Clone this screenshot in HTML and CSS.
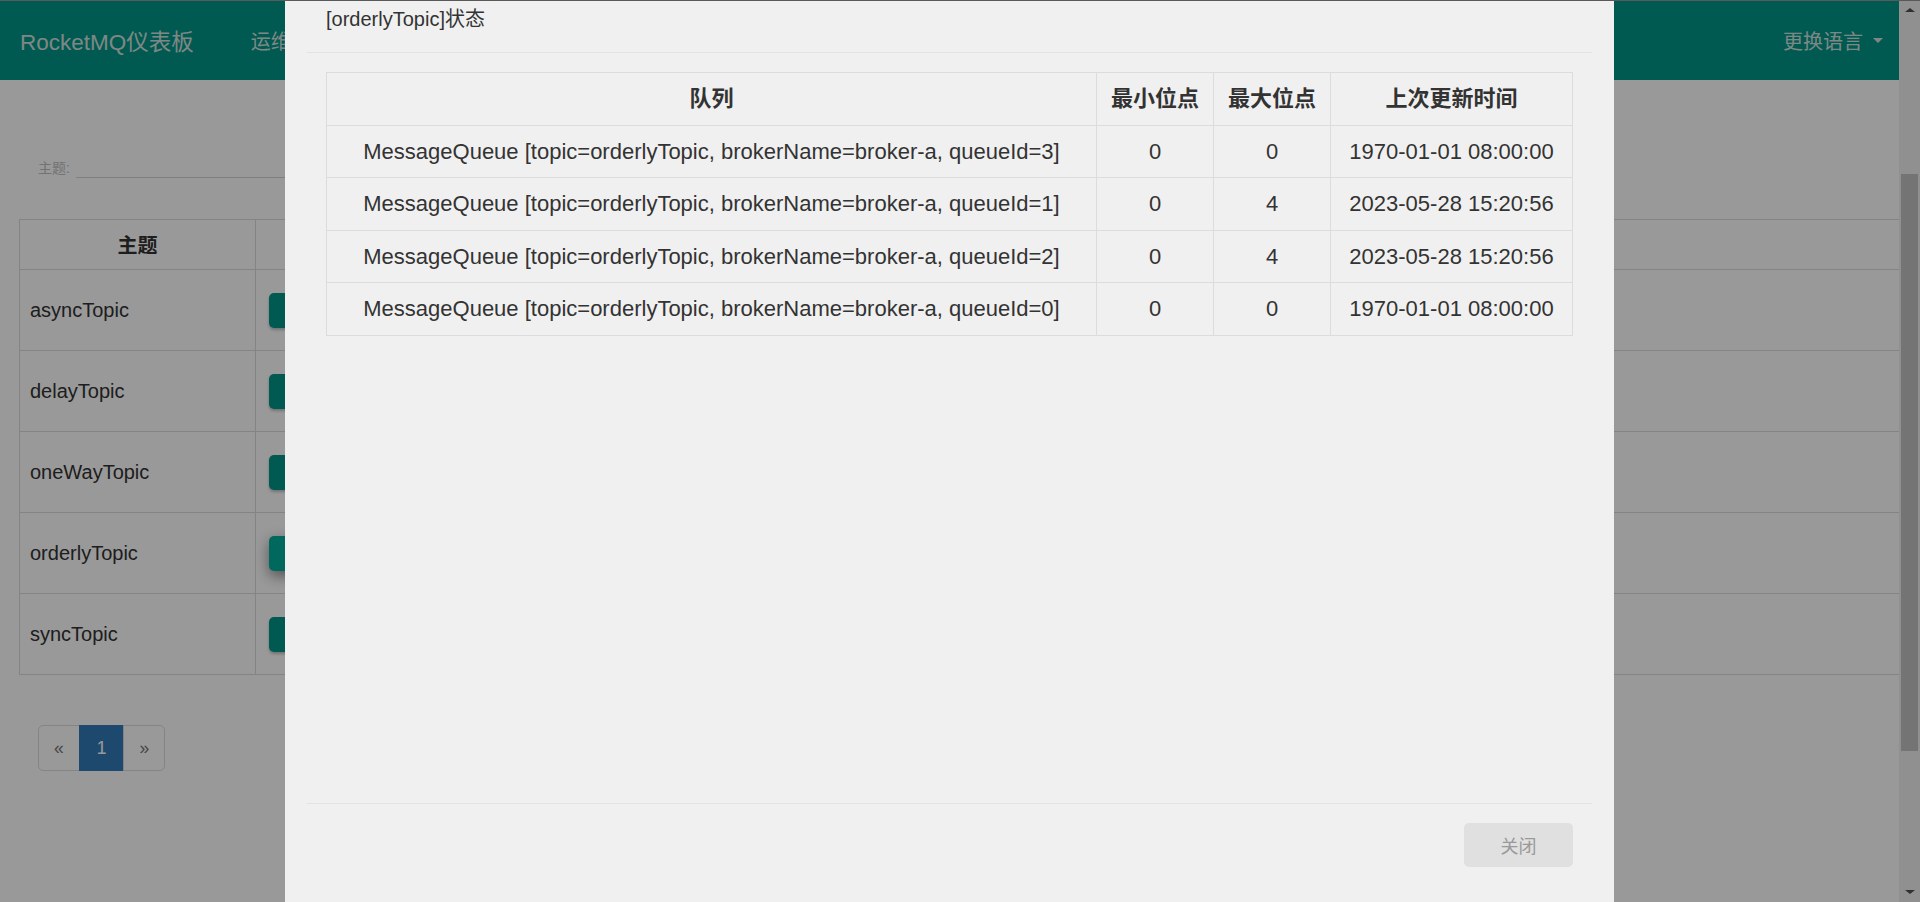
FILE: index.html
```html
<html lang="zh-CN">
  <head>
    <meta charset="utf-8">
    <title>RocketMQ仪表板</title>
    <link rel="stylesheet" href="styles.css">
  </head>
  <body>
    <div class="page">
      <nav class="navbar">
        <span class="brand">RocketMQ仪表板</span>
        <ul class="nav-links">
          <li>运维</li>
          <li>驾驶舱</li>
          <li>集群</li>
          <li>主题</li>
          <li>消费者</li>
          <li>生产者</li>
          <li>消息</li>
          <li>消息轨迹</li>
        </ul>
        <div class="lang">更换语言 <span class="caret"></span></div>
      </nav>

      <main class="content">
        <form class="search">
          <label for="topic-filter">主题:</label>
          <input type="text" id="topic-filter">
        </form>

        <table class="topic-table">
          <thead>
            <tr><th class="col-name">主题</th><th>操作</th></tr>
          </thead>
          <tbody>
            <tr><td>asyncTopic</td><td><button class="btn-teal">状态</button></td></tr>
            <tr><td>delayTopic</td><td><button class="btn-teal">状态</button></td></tr>
            <tr><td>oneWayTopic</td><td><button class="btn-teal">状态</button></td></tr>
            <tr><td>orderlyTopic</td><td><button class="btn-teal active">状态</button></td></tr>
            <tr><td>syncTopic</td><td><button class="btn-teal">状态</button></td></tr>
          </tbody>
        </table>

        <ul class="pagination">
          <li class="disabled"><a>&laquo;</a></li>
          <li class="current"><a>1</a></li>
          <li class="disabled"><a>&raquo;</a></li>
        </ul>
      </main>
    </div>

    <div class="scrollbar">
      <span class="arrow up"></span>
      <div class="track"><div class="thumb"></div></div>
      <span class="arrow down"></span>
    </div>

    <div class="backdrop"></div>

    <div class="modal">
      <div class="modal-header">[orderlyTopic]状态</div>
      <div class="modal-body">
        <table class="queue-table">
          <colgroup>
            <col class="c-queue">
            <col class="c-min">
            <col class="c-max">
            <col class="c-time">
          </colgroup>
          <thead>
            <tr><th>队列</th><th>最小位点</th><th>最大位点</th><th>上次更新时间</th></tr>
          </thead>
          <tbody>
            <tr><td>MessageQueue [topic=orderlyTopic, brokerName=broker-a, queueId=3]</td><td>0</td><td>0</td><td>1970-01-01 08:00:00</td></tr>
            <tr><td>MessageQueue [topic=orderlyTopic, brokerName=broker-a, queueId=1]</td><td>0</td><td>4</td><td>2023-05-28 15:20:56</td></tr>
            <tr><td>MessageQueue [topic=orderlyTopic, brokerName=broker-a, queueId=2]</td><td>0</td><td>4</td><td>2023-05-28 15:20:56</td></tr>
            <tr><td>MessageQueue [topic=orderlyTopic, brokerName=broker-a, queueId=0]</td><td>0</td><td>0</td><td>1970-01-01 08:00:00</td></tr>
          </tbody>
        </table>
      </div>
      <div class="modal-footer">
        <button type="button" class="btn-close">关闭</button>
      </div>
    </div>

    <div class="top-edge"></div>
  </body>
</html>
```

FILE: styles.css
```css
body {
  margin: 0;
  display: flex;
  height: 902px;
  overflow: hidden;
  background: #fff;
  color: #333;
  font-family: "Liberation Sans", "Noto Sans CJK SC", sans-serif;
}
.page {
  flex: 1;
  overflow: hidden;
}
.navbar {
  height: 80px;
  background: #009688;
  display: flex;
  align-items: center;
  color: #d4e2de;
}
.brand {
  font-size: 22.5px;
  padding-left: 20px;
  white-space: nowrap;
}
.nav-links {
  display: flex;
  list-style: none;
  margin: 0 0 0 57px;
  padding: 0;
  font-size: 20px;
  flex: 1;
}
.nav-links li {
  margin-right: 38px;
  white-space: nowrap;
}
.lang {
  font-size: 20px;
  padding-right: 16px;
  display: flex;
  align-items: center;
}
.caret {
  display: inline-block;
  margin-left: 10px;
  border-top: 5px solid #d4e2de;
  border-left: 5px solid transparent;
  border-right: 5px solid transparent;
}
.search {
  display: flex;
  align-items: center;
  height: 21px;
  margin: 77px 0 41px 38px;
}
.search label {
  font-size: 14px;
  line-height: 20px;
  color: #c0c0c0;
}
.search input {
  height: 21px;
  width: 520px;
  margin-left: 6px;
  border: 0;
  border-bottom: 1px solid #d4d4d4;
  background: transparent;
  box-sizing: border-box;
}
.topic-table {
  margin-left: 19px;
  width: calc(100% - 18px);
  border-collapse: collapse;
  font-size: 20px;
}
.topic-table th,
.topic-table td {
  border: 1px solid #ddd;
  padding: 0 10px;
}
.topic-table th:last-child,
.topic-table td:last-child {
  border-right: 0;
}
.topic-table th {
  height: 50px;
  font-weight: bold;
}
.topic-table td {
  height: 81px;
}
.topic-table .col-name {
  width: 215px;
}
.btn-teal {
  display: block;
  margin-left: 3px;
  width: 96px;
  height: 35px;
  border: 0;
  border-radius: 5px;
  background: #009688;
  color: #fff;
  font-size: 17.5px;
  box-shadow: 0 2px 3px rgba(0, 0, 0, 0.25);
}
.btn-teal.active {
  background: #00ad9a;
  box-shadow: 0 5px 14px rgba(0, 0, 0, 0.45);
}
.pagination {
  display: flex;
  list-style: none;
  margin: 50px 0 0 38px;
  padding: 0;
  font-size: 17.5px;
}
.pagination a {
  display: block;
  line-height: 25px;
  padding: 10px 15px 9px;
  border: 1px solid #ddd;
  margin-left: -1px;
  color: #777;
  background: #fff;
}
.pagination li:first-child a {
  margin-left: 0;
  border-radius: 5px 0 0 5px;
}
.pagination li:last-child a {
  border-radius: 0 5px 5px 0;
}
.pagination .current a {
  padding-left: 17px;
  padding-right: 17px;
  background: #337ab7;
  border-color: #337ab7;
  color: #fff;
}
.scrollbar {
  width: 21px;
  background: #f1f1f1;
  display: flex;
  flex-direction: column;
  align-items: center;
}
.arrow {
  width: 0;
  height: 0;
  border-left: 5px solid transparent;
  border-right: 5px solid transparent;
}
.arrow.up {
  margin: 8px 0 9px;
  border-bottom: 4px solid #505050;
}
.arrow.down {
  margin: 9px 0 8px;
  border-top: 4px solid #505050;
}
.track {
  flex: 1;
  align-self: stretch;
}
.thumb {
  margin: 153px 2px 0;
  height: 577px;
  background: #c1c1c1;
}
.backdrop {
  position: fixed;
  inset: 0;
  background: rgba(0, 0, 0, 0.4);
}
.modal {
  position: fixed;
  top: 0;
  bottom: 0;
  left: 285px;
  width: 1329px;
  padding: 0 22px;
  box-sizing: border-box;
  background: #f0f0f0;
  color: #333;
}
.modal-header {
  height: 53px;
  padding: 6px 19px 0;
  box-sizing: border-box;
  border-bottom: 1px solid #e3e3e3;
  font-size: 20px;
  line-height: 27px;
}
.modal-body {
  height: 750px;
  padding: 19px 19px 0;
  box-sizing: border-box;
}
.queue-table {
  width: 100%;
  border-collapse: collapse;
  font-size: 22px;
  line-height: 31.5px;
}
.queue-table th,
.queue-table td {
  border: 1px solid #dcdcdc;
  padding: 10px;
  text-align: center;
  white-space: nowrap;
}
.queue-table th {
  font-weight: bold;
}
.c-queue { width: 770px; }
.c-min { width: 117px; }
.c-max { width: 117px; }
.modal-footer {
  border-top: 1px solid #e3e3e3;
  padding: 19px 19px 0;
  display: flex;
  justify-content: flex-end;
}
.btn-close {
  width: 109px;
  height: 44px;
  border: 0;
  border-radius: 5px;
  background: #e0e0e0;
  color: #999;
  font-family: inherit;
  font-size: 18px;
}
.top-edge {
  position: fixed;
  top: 0;
  left: 0;
  right: 0;
  height: 1px;
  background: #595959;
}
```
